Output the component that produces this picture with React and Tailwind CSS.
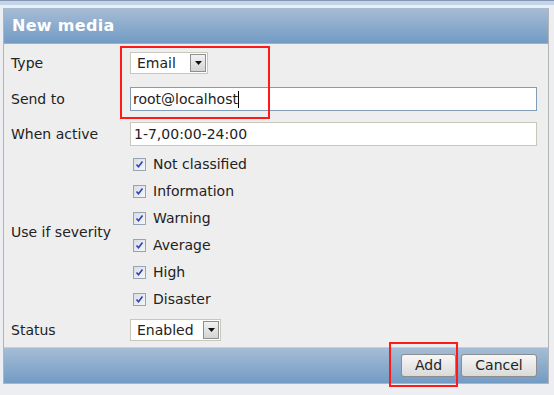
import React from "react";

function Check() {
  return (
    <span className="w-[13px] h-[13px] border border-[#98a4b4] bg-gradient-to-br from-[#d9dde4] to-[#f5f6f8] flex items-center justify-center shrink-0">
      <svg width="9" height="9" viewBox="0 0 9 9">
        <path d="M1.5 4.5 L3.5 6.8 L7.5 1.5" fill="none" stroke="#2a44b8" strokeWidth="1.6" />
      </svg>
    </span>
  );
}

function Select({ value, width }) {
  return (
    <div className={`h-[22px] ${width} bg-white border border-[#c9c7ba] flex items-center justify-between pl-[6px] pr-[1px]`}>
      <span>{value}</span>
      <span className="w-[16px] h-[18px] border border-[#8f8f8f] bg-gradient-to-b from-[#f2f2f2] to-[#d4d4d4] flex items-center justify-center">
        <svg width="7" height="4" viewBox="0 0 7 4"><path d="M0 0 H7 L3.5 4 Z" fill="#111" /></svg>
      </span>
    </div>
  );
}

export default function App() {
  const sev = ["Not classified", "Information", "Warning", "Average", "High", "Disaster"];
  return (
    <div className="w-[554px] h-[395px] bg-[#eceef2] relative overflow-hidden text-[#222] text-[14px]" style={{ fontFamily: '"DejaVu Sans", Verdana, sans-serif' }}>
      <div className="h-[1px] bg-[#8797b0]" />
      <div className="h-[4px] bg-[#c3d5ea]" />
      <div className="h-[3px]" />
      <div className="ml-[3px] w-[546px] border border-[#b4b4b4] border-t-0 bg-[#eeeeee]">
        <div className="h-[36px] bg-gradient-to-b from-[#a6bdd5] to-[#739bc4] flex items-center pl-[8px] border-b border-[#9ab0c8]">
          <span className="text-white font-bold text-[16px] tracking-[0.3px]">New media</span>
        </div>
        <div className="grid grid-cols-[119px_1fr] pl-[7px] pr-[11px]">
          <div className="h-[37px] flex items-center pt-[1px]">Type</div>
          <div className="h-[37px] flex items-center pt-[1px]"><Select value="Email" width="w-[78px]" /></div>

          <div className="h-[36px] flex items-center">Send to</div>
          <div className="h-[36px] flex items-center">
            <div className="h-[24px] w-full bg-white border border-[#7f9db9] flex items-center pl-[2px]">
              <span>root@localhost</span><span className="w-[1px] h-[17px] bg-black" />
            </div>
          </div>

          <div className="h-[34px] flex items-center">When active</div>
          <div className="h-[34px] flex items-center">
            <div className="h-[24px] w-full bg-white border border-[#c9c7ba] flex items-center pl-[3px]">1-7,00:00-24:00</div>
          </div>

          <div className="h-[162px] flex items-center">Use if severity</div>
          <div className="flex flex-col pl-[3px]">
            {sev.map((s) => (
              <div key={s} className="h-[27px] flex items-center gap-[7px]">
                <Check />
                <span>{s}</span>
              </div>
            ))}
          </div>

          <div className="h-[34px] flex items-center">Status</div>
          <div className="h-[34px] flex items-center"><Select value="Enabled" width="w-[91px]" /></div>
        </div>
        <div className="h-[36px] bg-gradient-to-b from-[#a6bdd5] to-[#739bc4] border-t border-[#c2d0de] flex items-center justify-end gap-[5px] pr-[11px]">
          <button className="w-[55px] h-[23px] rounded-[3px] border border-[#8d8d8d] bg-gradient-to-b from-[#f7f7f7] to-[#dadada] text-[#222]">Add</button>
          <button className="w-[76px] h-[23px] rounded-[3px] border border-[#8d8d8d] bg-gradient-to-b from-[#f7f7f7] to-[#dadada] text-[#222]">Cancel</button>
        </div>
      </div>
      <div className="absolute left-[120px] top-[46px] w-[150px] h-[73px] border-2 border-[#ff1a1a]" />
      <div className="absolute left-[389px] top-[342px] w-[69px] h-[45px] border-2 border-[#ff1a1a]" />
    </div>
  );
}
